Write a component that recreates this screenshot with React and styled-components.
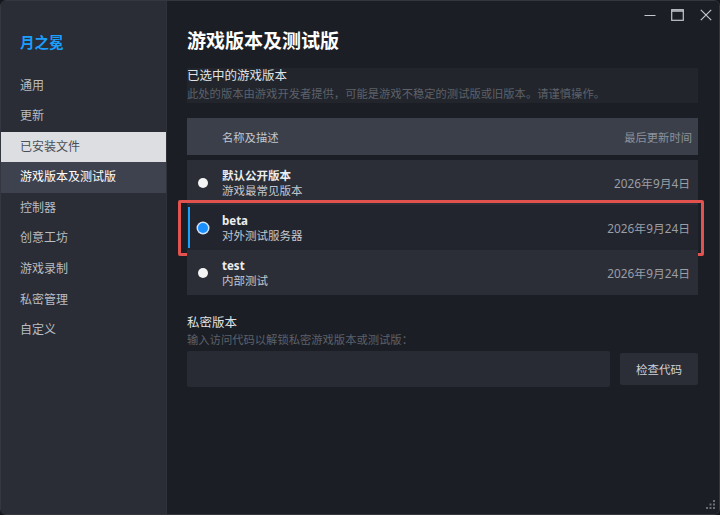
import React, { useState } from "react"
import styled, { createGlobalStyle } from "styled-components"

const GlobalStyle = createGlobalStyle`
  html, body {
    margin: 0;
    padding: 0;
    background: #15171d;
  }
  * {
    box-sizing: border-box;
  }
`

const FONT = `"Noto Sans", "Noto Sans CJK SC", sans-serif`

const navItems = ["通用", "更新", "已安装文件", "游戏版本及测试版", "控制器", "创意工坊", "游戏录制", "私密管理", "自定义"]

const branches = [
  { id: "public", name: "默认公开版本", desc: "游戏最常见版本", date: "2026年9月4日" },
  { id: "beta", name: "beta", desc: "对外测试服务器", date: "2026年9月24日" },
  { id: "test", name: "test", desc: "内部测试", date: "2026年9月24日" },
]

const App = () => {
  const [selected, setSelected] = useState("beta")
  const [code, setCode] = useState("")

  return (
    <>
      <GlobalStyle />
      <Window>
        <Sidebar>
          <GameTitle>月之冕</GameTitle>
          <Nav>
            {navItems.map((el, index) => (
              <NavItem key={el} hover={index === 2} active={index === 3}>
                {el}
              </NavItem>
            ))}
          </Nav>
        </Sidebar>
        <Main>
          <TopBar>
            <WinButton aria-label="minimize">
              <svg width="12" height="12" viewBox="0 0 12 12">
                <path d="M0.5 6.5h11" stroke="#c4c7cd" strokeWidth="1.2" />
              </svg>
            </WinButton>
            <WinButton aria-label="maximize">
              <svg width="13" height="12" viewBox="0 0 13 12">
                <rect x="0.7" y="0.7" width="11.6" height="10.6" fill="none" stroke="#c4c7cd" strokeWidth="1.2" />
                <path d="M0.7 2h11.6" stroke="#c4c7cd" strokeWidth="1.6" />
              </svg>
            </WinButton>
            <WinButton aria-label="close">
              <svg width="12" height="12" viewBox="0 0 12 12">
                <path d="M0.8 0.8l10.4 10.4M11.2 0.8L0.8 11.2" stroke="#c4c7cd" strokeWidth="1.2" />
              </svg>
            </WinButton>
          </TopBar>
          <PageTitle>游戏版本及测试版</PageTitle>

          <InfoBox>
            <SectionTitle>已选中的游戏版本</SectionTitle>
            <SectionHint>此处的版本由游戏开发者提供，可能是游戏不稳定的测试版或旧版本。请谨慎操作。</SectionHint>
          </InfoBox>

          <TableHead>
            <span>名称及描述</span>
            <HeadRight>最后更新时间</HeadRight>
          </TableHead>
          <Rows>
            {branches.map((b) => (
              <Row key={b.id} selected={selected === b.id} onClick={() => setSelected(b.id)}>
                <Radio selected={selected === b.id} />
                <RowText>
                  <RowName>{b.name}</RowName>
                  <RowDesc>{b.desc}</RowDesc>
                </RowText>
                <RowDate>{b.date}</RowDate>
              </Row>
            ))}
          </Rows>

          <PrivateTitle>私密版本</PrivateTitle>
          <PrivateHint>输入访问代码以解锁私密游戏版本或测试版：</PrivateHint>
          <CodeRow>
            <CodeInput value={code} onChange={(e) => setCode(e.target.value)} />
            <CheckButton>检查代码</CheckButton>
          </CodeRow>
        </Main>
        <Grip>
          <svg width="10" height="10" viewBox="0 0 10 10">
            <rect x="7" y="0" width="2" height="2" fill="#6a6e76" />
            <rect x="3.5" y="3.5" width="2" height="2" fill="#6a6e76" />
            <rect x="7" y="3.5" width="2" height="2" fill="#6a6e76" />
            <rect x="0" y="7" width="2" height="2" fill="#6a6e76" />
            <rect x="3.5" y="7" width="2" height="2" fill="#6a6e76" />
            <rect x="7" y="7" width="2" height="2" fill="#6a6e76" />
          </svg>
        </Grip>
      </Window>
    </>
  )
}

const Window = styled.div`
  position: relative;
  display: flex;
  width: 720px;
  height: 515px;
  overflow: hidden;
  border: 1px solid #34373f;
  border-radius: 6px;
  font-family: ${FONT};
  background: #1b1e25;
`

const Sidebar = styled.div`
  width: 166px;
  flex-shrink: 0;
  background: #2a2d35;
  border-right: 1px solid #30323a;
  padding-top: 31px;
`

const GameTitle = styled.div`
  padding-left: 19px;
  font-size: 14.5px;
  line-height: 20px;
  font-weight: 700;
  color: #1a9fff;
`

const Nav = styled.div`
  margin-top: 18.5px;
  display: flex;
  flex-direction: column;
`

const NavItem = styled.div`
  height: 30.6px;
  line-height: 30.6px;
  padding-left: 19px;
  font-size: 12px;
  color: ${(props) => (props.hover ? "#4a4e56" : props.active ? "#ffffff" : "#b9bdc3")};
  background-color: ${(props) => (props.hover ? "#dcdee2" : props.active ? "#3d424e" : "transparent")};
  cursor: pointer;
`

const Main = styled.div`
  flex: 1;
  display: flex;
  flex-direction: column;
  padding: 0 21px 0 20px;
  background: #1b1e25;
`

const TopBar = styled.div`
  height: 28px;
  display: flex;
  justify-content: flex-end;
  align-items: center;
  gap: 15px;
  margin-right: -14px;
`

const WinButton = styled.div`
  width: 13px;
  height: 13px;
  display: flex;
  align-items: center;
  justify-content: center;
`

const PageTitle = styled.h1`
  margin: 0;
  font-size: 19px;
  line-height: 24px;
  font-weight: 700;
  color: #ffffff;
`

const InfoBox = styled.div`
  margin-top: 15px;
  background: #22252c;
  padding-bottom: 1px;
`

const SectionTitle = styled.div`
  font-size: 12.5px;
  line-height: 16px;
  color: #dfe2e6;
`

const SectionHint = styled.div`
  margin-top: 2px;
  font-size: 11.3px;
  line-height: 16px;
  color: #5d6169;
  white-space: nowrap;
`

const TableHead = styled.div`
  margin-top: 15px;
  height: 37px;
  display: flex;
  align-items: center;
  justify-content: space-between;
  padding: 0 6px 0 35px;
  background: #3b3f4a;
  font-size: 11.3px;
  color: #c3c7cd;
`

const HeadRight = styled.span`
  color: #8d929a;
`

const Rows = styled.div`
  margin-top: 5px;
  display: flex;
  flex-direction: column;
  background: #2b2e37;
`

const Row = styled.div`
  position: relative;
  height: 45px;
  display: flex;
  align-items: center;
  padding: 0 8px 0 11px;
  background: ${(props) => (props.selected ? "#22252d" : "#2b2e37")};
  cursor: pointer;

  &::before {
    content: "";
    display: ${(props) => (props.selected ? "block" : "none")};
    position: absolute;
    left: 1px;
    top: 2px;
    bottom: 2px;
    width: 2px;
    background: #1a9fff;
  }

  &::after {
    content: "";
    display: ${(props) => (props.selected ? "block" : "none")};
    position: absolute;
    left: -9px;
    right: -6px;
    top: -5px;
    bottom: -6px;
    border: 3px solid #e2524f;
    border-radius: 2px;
    pointer-events: none;
  }
`

const Radio = styled.span`
  width: 10px;
  height: 10px;
  border-radius: 50%;
  flex-shrink: 0;
  background: ${(props) => (props.selected ? "#1a8fff" : "#f4f4f4")};
  box-shadow: ${(props) => (props.selected ? "0 0 0 1.5px #cfe4ff" : "none")};
`

const RowText = styled.div`
  flex: 1;
  margin-left: 14px;
  display: flex;
  flex-direction: column;
`

const RowName = styled.div`
  font-size: 11.5px;
  line-height: 15px;
  font-weight: 700;
  color: #eceef0;
`

const RowDesc = styled.div`
  font-size: 11.5px;
  line-height: 15px;
  color: #c3c7cd;
`

const RowDate = styled.div`
  font-size: 11.8px;
  color: #9a9ea6;
`

const PrivateTitle = styled.div`
  margin-top: 19px;
  font-size: 12.5px;
  line-height: 18px;
  color: #dfe2e6;
`

const PrivateHint = styled.div`
  margin-top: 0;
  font-size: 11.3px;
  line-height: 16px;
  color: #5d6169;
`

const CodeRow = styled.div`
  margin-top: 3px;
  display: flex;
  align-items: center;
  gap: 10px;
`

const CodeInput = styled.input`
  flex: 1;
  height: 36px;
  border: none;
  outline: none;
  border-radius: 2px;
  background: #282b33;
  color: #dfe2e6;
  padding: 0 10px;
  font-family: ${FONT};
  font-size: 12px;
`

const CheckButton = styled.button`
  width: 78px;
  height: 32px;
  border: none;
  border-radius: 2px;
  background: #2b2e37;
  color: #cfd2d7;
  font-family: ${FONT};
  font-size: 11.5px;
  cursor: pointer;
`

const Grip = styled.div`
  position: absolute;
  right: 3px;
  bottom: 4px;
  width: 10px;
  height: 10px;
  display: flex;
`

export default App
